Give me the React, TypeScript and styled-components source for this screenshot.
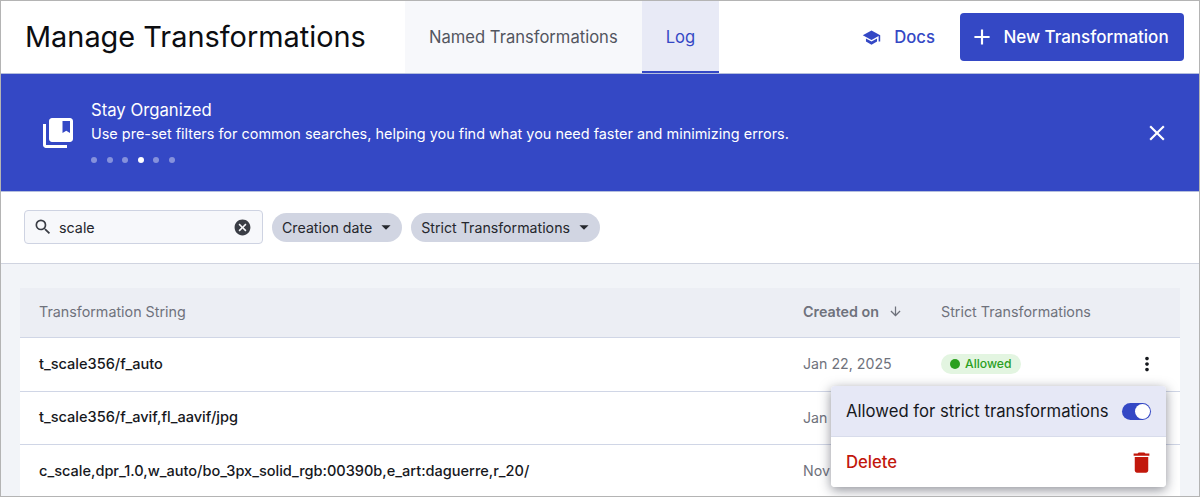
import type { FC } from "react";
import styled, { createGlobalStyle } from "styled-components";
import {
  MdAdd,
  MdArrowDownward,
  MdArrowDropDown,
  MdCancel,
  MdClose,
  MdCollectionsBookmark,
  MdDelete,
  MdMoreVert,
  MdSchool,
  MdSearch,
} from "react-icons/md";

const BLUE = "#3448c5";

const GlobalStyle = createGlobalStyle`
  html, body {
    margin: 0;
    padding: 0;
    height: 497px;
    overflow: hidden;
    font-family: Inter, "Liberation Sans", sans-serif;
  }
`;

const Frame = styled.div`
  position: relative;
  box-sizing: border-box;
  width: 1200px;
  height: 497px;
  border: 1px solid #b4b4b4;
  overflow: hidden;
  background: #f2f4f8;
  display: flex;
  flex-direction: column;
`;

const Header = styled.header`
  box-sizing: border-box;
  height: 73px;
  flex: none;
  display: flex;
  background: #ffffff;
  padding-left: 24px;
  border-bottom: 1px solid #b4bedd;
`;

const Title = styled.h1`
  width: 380px;
  margin: 0;
  align-self: center;
  font-size: 28.9px;
  line-height: 36px;
  font-weight: 400;
  color: #0c0d11;
  white-space: nowrap;
`;

const Tab = styled.div<{ $active?: boolean }>`
  box-sizing: border-box;
  display: flex;
  align-items: center;
  justify-content: center;
  padding: 2px 24px 0;
  font-size: 16.6px;
  white-space: nowrap;
  color: ${(p) => (p.$active ? BLUE : "#53565f")};
  background: ${(p) => (p.$active ? "#e8eaf6" : "#f7f8fb")};
  border-bottom: 2px solid ${(p) => (p.$active ? BLUE : "transparent")};
`;

const HeaderActions = styled.div`
  margin-left: auto;
  padding-right: 15px;
  display: flex;
  align-items: center;
  gap: 25px;
`;

const DocsLink = styled.a`
  display: flex;
  align-items: center;
  gap: 13px;
  font-size: 16.7px;
  font-weight: 500;
  color: ${BLUE};
  svg {
    font-size: 19px;
  }
`;

const PrimaryButton = styled.button`
  box-sizing: border-box;
  width: 224px;
  height: 48px;
  display: flex;
  align-items: center;
  justify-content: center;
  gap: 8px;
  border: none;
  border-radius: 4px;
  padding: 0 6px 0 0;
  background: ${BLUE};
  color: #ffffff;
  font-family: inherit;
  font-size: 17px;
  font-weight: 500;
  white-space: nowrap;
  svg {
    font-size: 26px;
  }
`;

const Banner = styled.section`
  box-sizing: border-box;
  height: 118px;
  flex: none;
  display: flex;
  align-items: center;
  background: ${BLUE};
  color: #ffffff;
  padding: 0 29px 0 39px;
  border-bottom: 1px solid #b4bedd;
`;

const BannerIcon = styled(MdCollectionsBookmark)`
  font-size: 36px;
  flex: none;
  margin: 0 15px 0 0;
`;

const BannerBody = styled.div`
  flex: 1;
  display: flex;
  flex-direction: column;
  margin-top: -3px;
`;

const BannerTitle = styled.div`
  font-size: 16.7px;
  line-height: 22px;
`;

const BannerText = styled.div`
  margin-top: 3px;
  font-size: 14.45px;
  line-height: 20px;
`;

const Dots = styled.div`
  display: flex;
  gap: 9.5px;
  margin-top: 13px;
`;

const Dot = styled.span<{ $active?: boolean }>`
  width: 6px;
  height: 6px;
  border-radius: 50%;
  background: ${(p) => (p.$active ? "#ffffff" : "rgba(255, 255, 255, 0.4)")};
`;

const CloseIcon = styled(MdClose)`
  font-size: 26px;
  flex: none;
`;

const FilterBar = styled.div`
  box-sizing: border-box;
  height: 72px;
  flex: none;
  display: flex;
  align-items: center;
  gap: 9px;
  padding: 0 23px 1px;
  background: #ffffff;
  border-bottom: 1px solid #d0d4e0;
`;

const SearchBox = styled.div`
  box-sizing: border-box;
  width: 239px;
  height: 34px;
  display: flex;
  align-items: center;
  padding: 0 10px 0 8px;
  border: 1px solid #ced3e2;
  border-radius: 4px;
  background: #f7f8fb;
  color: #3a3d45;
`;

const SearchValue = styled.span`
  flex: 1;
  margin-left: 6px;
  font-size: 14.3px;
  color: #25272d;
`;

const Chip = styled.div`
  box-sizing: border-box;
  height: 29px;
  display: flex;
  align-items: center;
  padding: 0 6px 0 10px;
  gap: 3px;
  border-radius: 15px;
  background: #d1d5e2;
  font-size: 14.2px;
  color: #25272d;
  white-space: nowrap;
  svg {
    font-size: 22px;
    margin-right: -1px;
  }
`;

const TableWrap = styled.div`
  padding: 24px 19px 0;
`;

const Row = styled.div<{ $head?: boolean }>`
  box-sizing: border-box;
  height: ${(p) => (p.$head ? "50px" : "53.5px")};
  display: grid;
  grid-template-columns: 764px 138px 1fr 50px;
  align-items: center;
  padding: ${(p) => (p.$head ? "0 0 2px 19px" : "0 0 1px 19px")};
  background: ${(p) => (p.$head ? "#eceef4" : "#ffffff")};
  border-bottom: 1px solid #d0d6e6;
  font-size: 13.6px;
`;

const HeadCell = styled.div<{ $strong?: boolean }>`
  display: flex;
  align-items: center;
  gap: 9px;
  font-size: 14.3px;
  color: #6f727c;
  font-weight: ${(p) => (p.$strong ? 600 : 400)};
  white-space: nowrap;
  svg {
    font-size: 15px;
  }
`;

const StringCell = styled.div`
  font-size: 14.55px;
  font-weight: 500;
  color: #16181d;
  white-space: nowrap;
`;

const DateCell = styled.div`
  font-size: 14.2px;
  color: #6f727c;
  white-space: nowrap;
`;

const StatusBadge = styled.span`
  display: inline-flex;
  align-items: center;
  gap: 5px;
  height: 20px;
  padding: 0 9px;
  border-radius: 10px;
  background: #e3f5e1;
  color: #2aa01f;
  font-size: 12.2px;
  font-weight: 500;
  &::before {
    content: "";
    width: 10px;
    height: 10px;
    border-radius: 50%;
    background: #2aa01f;
  }
`;

const MoreCell = styled.div`
  display: flex;
  justify-content: flex-start;
  color: #16181d;
  font-size: 22px;
  margin-left: 6px;
`;

const Menu = styled.div`
  position: absolute;
  left: 830px;
  top: 385px;
  width: 335px;
  background: #ffffff;
  border-radius: 4px;
  overflow: hidden;
  box-shadow: 0 3px 12px rgba(30, 34, 50, 0.5);
`;

const MenuItem = styled.div<{ $active?: boolean; $danger?: boolean }>`
  box-sizing: border-box;
  height: ${(p) => (p.$active ? "51px" : "50px")};
  display: flex;
  align-items: center;
  justify-content: space-between;
  padding: 0 15px;
  font-size: 16.7px;
  font-weight: ${(p) => (p.$danger ? 500 : 400)};
  background: ${(p) => (p.$active ? "#e6e8f6" : "#ffffff")};
  color: ${(p) => (p.$danger ? "#c2180c" : "#16181d")};
  border-bottom: ${(p) => (p.$active ? "1px solid #d8dceb" : "none")};
  white-space: nowrap;
  svg {
    font-size: 27px;
    margin-right: -4px;
  }
`;

const Toggle = styled.span`
  position: relative;
  width: 29px;
  height: 17px;
  border-radius: 9px;
  background: ${BLUE};
  &::after {
    content: "";
    position: absolute;
    right: 1px;
    top: 1px;
    width: 15px;
    height: 15px;
    border-radius: 50%;
    background: #ffffff;
  }
`;

interface LogEntry {
  value: string;
  created: string;
  allowed?: boolean;
}

const entries: LogEntry[] = [
  { value: "t_scale356/f_auto", created: "Jan 22, 2025", allowed: true },
  { value: "t_scale356/f_avif,fl_aavif/jpg", created: "Jan 22, 2025" },
  {
    value: "c_scale,dpr_1.0,w_auto/bo_3px_solid_rgb:00390b,e_art:daguerre,r_20/",
    created: "Nov 14, 2024",
  },
];

const App: FC = () => (
  <Frame>
    <GlobalStyle />
    <Header>
      <Title>Manage Transformations</Title>
      <Tab>Named Transformations</Tab>
      <Tab $active>Log</Tab>
      <HeaderActions>
        <DocsLink>
          <MdSchool />
          Docs
        </DocsLink>
        <PrimaryButton>
          <MdAdd />
          New Transformation
        </PrimaryButton>
      </HeaderActions>
    </Header>

    <Banner>
      <BannerIcon />
      <BannerBody>
        <BannerTitle>Stay Organized</BannerTitle>
        <BannerText>
          Use pre-set filters for common searches, helping you find what you need faster and
          minimizing errors.
        </BannerText>
        <Dots>
          {[0, 1, 2, 3, 4, 5].map((i) => (
            <Dot key={i} $active={i === 3} />
          ))}
        </Dots>
      </BannerBody>
      <CloseIcon />
    </Banner>

    <FilterBar>
      <SearchBox>
        <MdSearch size={20} />
        <SearchValue>scale</SearchValue>
        <MdCancel size={19} />
      </SearchBox>
      <Chip>
        Creation date
        <MdArrowDropDown />
      </Chip>
      <Chip>
        Strict Transformations
        <MdArrowDropDown />
      </Chip>
    </FilterBar>

    <TableWrap>
      <Row $head>
        <HeadCell>Transformation String</HeadCell>
        <HeadCell $strong>
          Created on
          <MdArrowDownward />
        </HeadCell>
        <HeadCell>Strict Transformations</HeadCell>
      </Row>
      {entries.map((entry) => (
        <Row key={entry.value}>
          <StringCell>{entry.value}</StringCell>
          <DateCell>{entry.created}</DateCell>
          <div>{entry.allowed && <StatusBadge>Allowed</StatusBadge>}</div>
          {entry.allowed && (
            <MoreCell>
              <MdMoreVert />
            </MoreCell>
          )}
        </Row>
      ))}
    </TableWrap>

    <Menu>
      <MenuItem $active>
        Allowed for strict transformations
        <Toggle />
      </MenuItem>
      <MenuItem $danger>
        Delete
        <MdDelete />
      </MenuItem>
    </Menu>
  </Frame>
);

export default App;
